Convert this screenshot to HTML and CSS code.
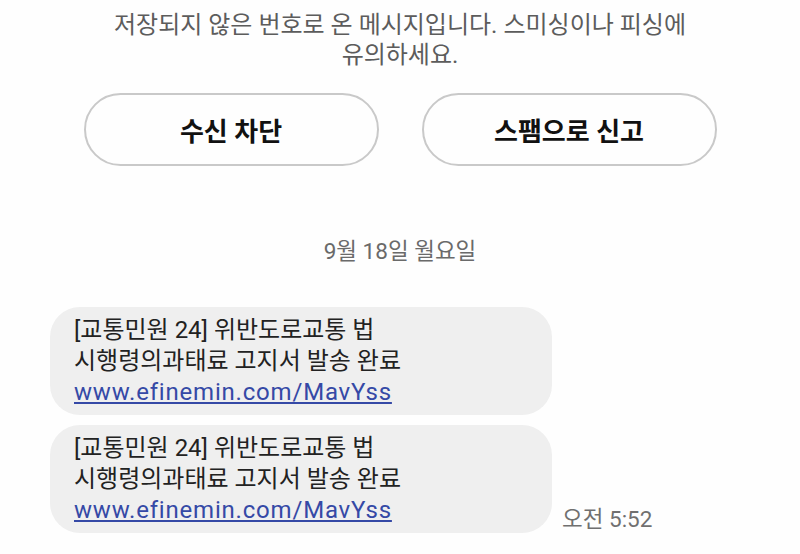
FILE: index.html
```
<!DOCTYPE html>
<html lang="ko">
<head>
  <meta charset="UTF-8" />
  <meta name="viewport" content="width=device-width, initial-scale=1.0"/>
  <title>메시지</title>
  <link rel="stylesheet" href="styles.css">
</head>
<body>
  <div class="notice">
    저장되지 않은 번호로 온 메시지입니다. 스미싱이나 피싱에<br>
    유의하세요.
  </div>

  <div class="actions">
    <button class="pill-btn">수신 차단</button>
    <button class="pill-btn">스팸으로 신고</button>
  </div>

  <div class="date">9월 18일 월요일</div>

  <div class="thread">
    <div class="msg-row">
      <div class="bubble">
        [교통민원 24] 위반도로교통 법<br>
        시행령의과태료 고지서 발송 완료<br>
        <a href="#">www.efinemin.com/MavYss</a>
      </div>
    </div>
    <div class="msg-row">
      <div class="bubble">
        [교통민원 24] 위반도로교통 법<br>
        시행령의과태료 고지서 발송 완료<br>
        <a href="#">www.efinemin.com/MavYss</a>
      </div>
      <span class="time">오전 5:52</span>
    </div>
  </div>
</body>
</html>
```

FILE: styles.css
```
* { box-sizing: border-box; margin: 0; padding: 0; }
body {
  background-color: #fefefe;
  color: #222;
  font-family: Roboto, "Noto Sans CJK KR", sans-serif;
  overflow: hidden;
  padding-top: 10px;
}
.notice {
  color: #5c5c5c;
  font-size: 24px;
  line-height: 30px;
  text-align: center;
}
.actions {
  display: flex;
  gap: 43px;
  justify-content: center;
  margin-top: 23px;
}
.pill-btn {
  background: #fefefe;
  border: 2px solid #c9c9c9;
  border-radius: 40px;
  color: #111;
  font-family: Roboto, "Noto Sans CJK KR", sans-serif;
  font-size: 26px;
  font-weight: bold;
  height: 73px;
  width: 295px;
}
.date {
  color: #6a6a6a;
  font-size: 22.5px;
  line-height: 30px;
  margin-top: 70px;
  text-align: center;
}
.thread {
  display: flex;
  flex-direction: column;
  gap: 10px;
  margin-top: 41px;
  padding-left: 50px;
}
.msg-row {
  align-items: flex-end;
  display: flex;
  gap: 10px;
}
.bubble {
  background-color: #efefef;
  border-radius: 30px;
  font-size: 24px;
  line-height: 31px;
  padding: 8px 24px 7px;
  width: 502px;
}
.bubble a {
  color: #3549a6;
  letter-spacing: 0.8px;
  text-decoration: underline;
}
.time {
  color: #707070;
  font-size: 22.5px;
  line-height: 26px;
  padding-bottom: 1px;
}
```
